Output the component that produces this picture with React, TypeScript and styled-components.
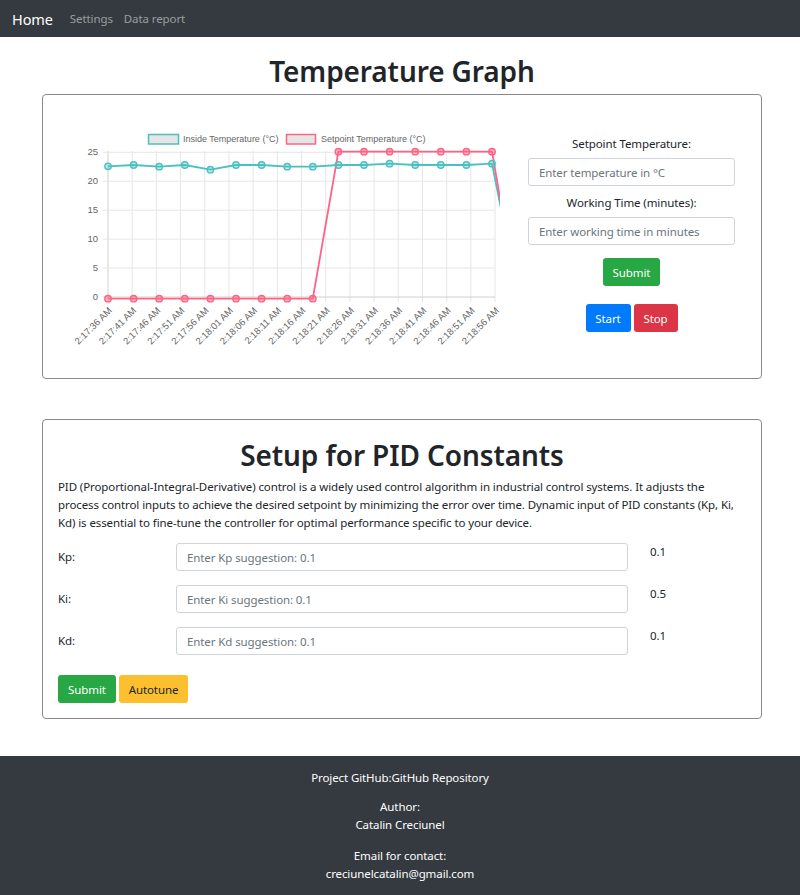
import React from "react";
import styled, { createGlobalStyle } from "styled-components";

const GlobalStyle = createGlobalStyle`
  html, body { margin: 0; padding: 0; background: #fff; }
  body {
    font-family: "Noto Sans", "Open Sans", sans-serif;
    color: #212529;
    font-size: 11.5px;
    letter-spacing: -0.1px;
    line-height: 18px;
  }
  * { box-sizing: border-box; }
  input::placeholder { color: #6c757d; opacity: 1; }
`;

const Navbar = styled.nav`
  height: 37px;
  background: #343a40;
  display: flex;
  align-items: center;
  padding: 0 12px;
`;

const Brand = styled.a`
  color: #fff;
  font-size: 14.5px;
  margin-right: 17px;
  text-decoration: none;
`;

const NavLink = styled.a`
  color: rgba(255, 255, 255, 0.5);
  font-size: 11.5px;
  margin-right: 11px;
  text-decoration: none;
`;

const Main = styled.main`
  padding: 0 38px 0 42px;
`;

const PageTitle = styled.h1`
  margin: 16px 0 5px;
  font-size: 28px;
  letter-spacing: -0.1px;
  line-height: 36px;
  font-weight: 600;
  text-align: center;
`;

const Card = styled.section`
  border: 1px solid #8a8a8a;
  border-radius: 4px;
  background: #fff;
`;

const GraphCard = styled(Card)`
  height: 285px;
  display: flex;
`;

const ChartWrap = styled.div`
  width: 470px;
  margin-left: 15px;
`;

const FormCol = styled.div`
  width: 207px;
  padding-top: 40px;
  display: flex;
  flex-direction: column;
  align-items: center;
`;

const FieldLabel = styled.label`
  display: block;
  text-align: center;
  margin-bottom: 5px;
`;

const TextInput = styled.input<{ $mb?: number }>`
  width: 100%;
  height: 28px;
  border: 1px solid #ced4da;
  border-radius: 3px;
  padding: 0 10px;
  font-family: inherit;
  font-size: 11.5px;
  letter-spacing: -0.1px;
  color: #495057;
  margin: 0 0 ${(p) => p.$mb ?? 0}px;
  outline: none;
`;

const Btn = styled.button<{ $bg: string; $fg?: string; $w: number }>`
  height: 28px;
  width: ${(p) => p.$w}px;
  padding: 0;
  border: none;
  border-radius: 3px;
  background: ${(p) => p.$bg};
  color: ${(p) => p.$fg ?? "#fff"};
  font-family: inherit;
  font-size: 11.5px;
  letter-spacing: -0.1px;
  cursor: pointer;
`;

const SubmitRow = styled.div`
  margin-top: 13px;
`;

const BtnRow = styled.div<{ $mt: number }>`
  margin-top: ${(p) => p.$mt}px;
  display: flex;
  gap: 3px;
`;

const PidCard = styled(Card)`
  margin-top: 40px;
  padding: 17px 15px 15px;
`;

const SectionTitle = styled.h2`
  margin: 0 0 5px;
  font-size: 28px;
  letter-spacing: -0.1px;
  line-height: 36px;
  font-weight: 600;
  text-align: center;
`;

const Para = styled.p`
  margin: 0 0 11px;
`;

const PidGrid = styled.div`
  display: grid;
  grid-template-columns: 118px 452px auto;
  row-gap: 14px;
  align-items: start;
`;

const RowLabel = styled.label`
  padding-top: 5px;
`;

const RowValue = styled.span`
  padding-left: 22px;
`;

const Footer = styled.footer`
  margin-top: 37px;
  background: #343a40;
  color: #fff;
  text-align: center;
  padding: 13px 0 12px;
`;

const FootPara = styled.p<{ $mt: number }>`
  margin: ${(p) => p.$mt}px 0 0;
`;

const TEAL = "rgb(75,192,192)";
const PINK = "rgb(255,99,132)";
const CHART_FONT = "'Liberation Sans', Arial, sans-serif";

const tealY = [166.3, 165, 166.7, 165, 169.7, 165, 165, 166.7, 166.7, 165, 165, 163.7, 165, 165, 165, 163.7, 291].map(
  (y) => y - 95
);
const pinkY = Array.from({ length: 17 }, (_, i) => (i >= 9 && i <= 15 ? 56.7 : 203.7));
const px = (i: number) => 50 + i * 25.6;
const gx = (i: number) => 50 + i * 24.19;
const labels = [
  "2:17:36 AM", "2:17:41 AM", "2:17:46 AM", "2:17:51 AM", "2:17:56 AM",
  "2:18:01 AM", "2:18:06 AM", "2:18:11 AM", "2:18:16 AM", "2:18:21 AM",
  "2:18:26 AM", "2:18:31 AM", "2:18:36 AM", "2:18:41 AM", "2:18:46 AM",
  "2:18:51 AM", "2:18:56 AM",
];
const yTicks = [25, 20, 15, 10, 5, 0];

const Chart: React.FC = () => (
  <svg width={470} height={283} viewBox="0 0 470 283" style={{ display: "block", letterSpacing: 0 }}>
    <defs>
      <clipPath id="plotClip">
        <rect x={0} y={0} width={442} height={283} />
      </clipPath>
    </defs>
    <rect x={90.5} y={39.5} width={30} height={9.5} fill="#e5e5e5" stroke={TEAL} strokeWidth={1.5} />
    <text x={125} y={44.5} fontSize={9} fill="#666" fontFamily={CHART_FONT} dominantBaseline="middle">
      Inside Temperature (°C)
    </text>
    <rect x={228.5} y={39.5} width={29} height={9.5} fill="#e5e5e5" stroke={PINK} strokeWidth={1.5} />
    <text x={263} y={44.5} fontSize={9} fill="#666" fontFamily={CHART_FONT} dominantBaseline="middle">
      Setpoint Temperature (°C)
    </text>
    {labels.map((_, i) => (
      <line key={"v" + i} x1={gx(i)} x2={gx(i)} y1={56} y2={207} stroke={i === 0 ? "#d0d0d0" : "#e6e6e6"} strokeWidth={1} />
    ))}
    {yTicks.map((t, k) => (
      <line key={"h" + t} x1={45} x2={437} y1={57.3 + k * 28.94} y2={57.3 + k * 28.94} stroke={t === 0 ? "#d0d0d0" : "#e6e6e6"} strokeWidth={1} />
    ))}
    {yTicks.map((t, k) => (
      <text key={"yl" + t} x={40} y={57.3 + k * 28.94} textAnchor="end" dominantBaseline="middle" fontSize={9.5} fill="#666" fontFamily={CHART_FONT}>
        {t}
      </text>
    ))}
    {labels.map((l, i) => (
      <text
        key={"xl" + i}
        transform={`translate(${gx(i) - 0.5}, 211) rotate(-45)`}
        textAnchor="end"
        dominantBaseline="hanging"
        fontSize={9.5}
        fill="#666"
        fontFamily={CHART_FONT}
      >
        {l}
      </text>
    ))}
    <g clipPath="url(#plotClip)">
      <polyline points={tealY.map((y, i) => `${px(i)},${y}`).join(" ")} fill="none" stroke={TEAL} strokeWidth={1.8} />
      <polyline points={pinkY.map((y, i) => `${px(i)},${y}`).join(" ")} fill="none" stroke={PINK} strokeWidth={1.8} />
      {tealY.map((y, i) => (
        <circle key={"tc" + i} cx={px(i)} cy={y} r={3.2} fill="rgba(75,192,192,0.35)" stroke={TEAL} strokeWidth={1.4} />
      ))}
      {pinkY.map((y, i) => (
        <circle key={"pc" + i} cx={px(i)} cy={y} r={3.2} fill="rgba(255,99,132,0.45)" stroke={PINK} strokeWidth={1.4} />
      ))}
    </g>
  </svg>
);

const pidRows = [
  { name: "Kp", value: "0.1" },
  { name: "Ki", value: "0.5" },
  { name: "Kd", value: "0.1" },
];

export default function App() {
  return (
    <>
      <GlobalStyle />
      <Navbar>
        <Brand href="#">Home</Brand>
        <NavLink href="#">Settings</NavLink>
        <NavLink href="#">Data report</NavLink>
      </Navbar>
      <Main>
        <PageTitle>Temperature Graph</PageTitle>
        <GraphCard>
          <ChartWrap>
            <Chart />
          </ChartWrap>
          <FormCol>
            <FieldLabel>Setpoint Temperature:</FieldLabel>
            <TextInput $mb={8} placeholder="Enter temperature in °C" />
            <FieldLabel>Working Time (minutes):</FieldLabel>
            <TextInput placeholder="Enter working time in minutes" />
            <SubmitRow>
              <Btn $bg="#28a745" $w={57}>Submit</Btn>
            </SubmitRow>
            <BtnRow $mt={18}>
              <Btn $bg="#007bff" $w={45}>Start</Btn>
              <Btn $bg="#dc3545" $w={44}>Stop</Btn>
            </BtnRow>
          </FormCol>
        </GraphCard>

        <PidCard>
          <SectionTitle>Setup for PID Constants</SectionTitle>
          <Para>
            PID (Proportional-Integral-Derivative) control is a widely used control algorithm in industrial control
            systems. It adjusts the process control inputs to achieve the desired setpoint by minimizing the error over
            time. Dynamic input of PID constants (Kp, Ki, Kd) is essential to fine-tune the controller for optimal
            performance specific to your device.
          </Para>
          <PidGrid>
            {pidRows.map((r) => (
              <React.Fragment key={r.name}>
                <RowLabel>{r.name}:</RowLabel>
                <TextInput placeholder={`Enter ${r.name} suggestion: 0.1`} />
                <RowValue>{r.value}</RowValue>
              </React.Fragment>
            ))}
          </PidGrid>
          <BtnRow $mt={20}>
            <Btn $bg="#28a745" $w={58}>Submit</Btn>
            <Btn $bg="#fcc02f" $fg="#212529" $w={69}>Autotune</Btn>
          </BtnRow>
        </PidCard>
      </Main>
      <Footer>
        <FootPara $mt={0}>Project GitHub:GitHub Repository</FootPara>
        <FootPara $mt={11}>
          Author:
          <br />
          Catalin Creciunel
        </FootPara>
        <FootPara $mt={13}>
          Email for contact:
          <br />
          creciunelcatalin@gmail.com
        </FootPara>
      </Footer>
    </>
  );
}
